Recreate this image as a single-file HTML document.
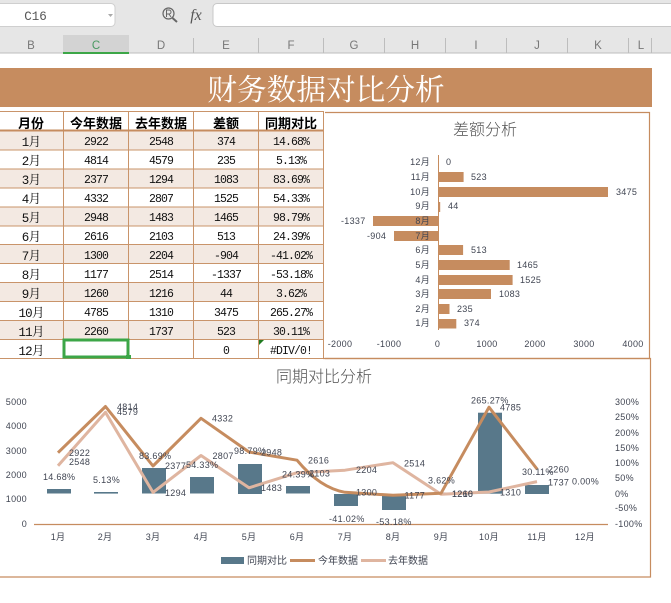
<!DOCTYPE html>
<html><head><meta charset="utf-8"><style>
html,body{margin:0;padding:0;background:#fff;width:671px;height:603px;overflow:hidden}
svg{display:block}
.h{font:11.5px "Liberation Sans",sans-serif;fill:#777;text-anchor:middle}
.m{font:11.5px "Liberation Mono","Noto Sans CJK SC",monospace;letter-spacing:-.9px;fill:#111;text-anchor:middle}
.c{font:12.5px "Liberation Mono","Noto Serif CJK SC",serif;letter-spacing:-.8px;fill:#111;text-anchor:middle}
.th{font:bold 13px "Noto Sans CJK SC",sans-serif;fill:#000;text-anchor:middle}
.l{font:9px "Liberation Sans","Noto Sans CJK SC",sans-serif;fill:#404552;letter-spacing:.3px}
.e{text-anchor:end}.mid{text-anchor:middle}
.t{font:16px "Noto Sans CJK SC",sans-serif;font-weight:300;fill:#505050;text-anchor:middle}
</style></head><body>
<svg width="671" height="603" viewBox="0 0 671 603" xmlns="http://www.w3.org/2000/svg">
<!-- toolbar -->
<rect width="671" height="53" fill="#e6e6e6"/>
<rect x="-6" y="3.500" width="121" height="23" rx="4" fill="#fff" stroke="#cfcfcf"/>
<rect x="213" y="3.500" width="470" height="23" rx="4" fill="#fff" stroke="#c8c8c8"/>
<text x="35.500" y="20" style="font:12.5px 'Liberation Mono',monospace;fill:#555" text-anchor="middle">C16</text>
<path d="M108 14h5l-2.500 3z" fill="#aaa"/>
<circle cx="168.500" cy="13.500" r="5.500" fill="none" stroke="#666" stroke-width="1.200"/>
<path d="M172.500 18l4.500 4" stroke="#666" stroke-width="2"/>
<path d="M166.500 17v-7h2.500a2 2 0 0 1 0 4h-2.500M169 14l2 3" fill="none" stroke="#666"/>
<text x="196" y="20" text-anchor="middle" style="font:italic 16px 'Liberation Serif',serif;fill:#555">fx</text>
<!-- col headers -->
<rect x="63" y="35" width="66" height="18" fill="#d3d3d3"/>
<rect y="52.500" width="671" height="1" fill="#bdbdbd"/>
<rect x="63" y="52" width="66" height="2" fill="#3ca647"/>
<path d="M193.500 38v15M258.500 38v15M323.500 38v15M384.500 38v15M445.500 38v15M506.500 38v15M567.500 38v15M628.500 38v15M651.500 38v15" stroke="#bdbdbd"/>
<text class="h" x="31" y="49">B</text><text class="h" x="96" y="49" style="fill:#4a9a62">C</text><text class="h" x="161" y="49">D</text><text class="h" x="226" y="49">E</text><text class="h" x="291" y="49">F</text><text class="h" x="354" y="49">G</text><text class="h" x="415" y="49">H</text><text class="h" x="476" y="49">I</text><text class="h" x="537" y="49">J</text><text class="h" x="598" y="49">K</text><text class="h" x="641" y="49">L</text>
<!-- title -->
<rect y="68" width="652" height="39" fill="#c68c5f"/>
<text x="326" y="100" text-anchor="middle" style="font:29.700px 'Noto Serif CJK SC',serif;fill:#fff">财务数据对比分析</text>
<!-- table fills -->
<g fill="#f3e9e2"><rect y="131" width="323" height="19"/><rect y="169" width="323" height="19"/><rect y="207" width="323" height="19"/><rect y="245" width="323" height="19"/><rect y="283" width="323" height="19"/><rect y="321" width="323" height="18"/></g>
<path d="M0 111.500H323.500M0 150H323.500M0 169H323.500M0 188H323.500M0 207H323.500M0 226H323.500M0 244.500H323.500M0 263.500H323.500M0 282.500H323.500M0 301.500H323.500M0 320.500H323.500M0 339.500H323.500M0 358.500H323.500M63.500 111V358M128.500 111V358M193.500 111V358M258.500 111V358M323.500 111V358" stroke="#c9946a" fill="none"/>
<rect y="129.500" width="323" height="2" fill="#c68c5f"/>
<g class="th"><text class="th" x="31" y="128">月份</text><text class="th" x="96" y="128">今年数据</text><text class="th" x="161" y="128">去年数据</text><text class="th" x="226" y="128">差额</text><text class="th" x="291" y="128">同期对比</text></g>
<g>
<text class="c" x="31" y="146">1月</text><text class="m" x="96" y="145">2922</text><text class="m" x="161" y="145">2548</text><text class="m" x="226" y="145">374</text><text class="m" x="291" y="145">14.68%</text>
<text class="c" x="31" y="165">2月</text><text class="m" x="96" y="164">4814</text><text class="m" x="161" y="164">4579</text><text class="m" x="226" y="164">235</text><text class="m" x="291" y="164">5.13%</text>
<text class="c" x="31" y="184">3月</text><text class="m" x="96" y="183">2377</text><text class="m" x="161" y="183">1294</text><text class="m" x="226" y="183">1083</text><text class="m" x="291" y="183">83.69%</text>
<text class="c" x="31" y="203">4月</text><text class="m" x="96" y="202">4332</text><text class="m" x="161" y="202">2807</text><text class="m" x="226" y="202">1525</text><text class="m" x="291" y="202">54.33%</text>
<text class="c" x="31" y="222">5月</text><text class="m" x="96" y="221">2948</text><text class="m" x="161" y="221">1483</text><text class="m" x="226" y="221">1465</text><text class="m" x="291" y="221">98.79%</text>
<text class="c" x="31" y="241">6月</text><text class="m" x="96" y="240">2616</text><text class="m" x="161" y="240">2103</text><text class="m" x="226" y="240">513</text><text class="m" x="291" y="240">24.39%</text>
<text class="c" x="31" y="260">7月</text><text class="m" x="96" y="259">1300</text><text class="m" x="161" y="259">2204</text><text class="m" x="226" y="259">-904</text><text class="m" x="291" y="259">-41.02%</text>
<text class="c" x="31" y="279">8月</text><text class="m" x="96" y="278">1177</text><text class="m" x="161" y="278">2514</text><text class="m" x="226" y="278">-1337</text><text class="m" x="291" y="278">-53.18%</text>
<text class="c" x="31" y="298">9月</text><text class="m" x="96" y="297">1260</text><text class="m" x="161" y="297">1216</text><text class="m" x="226" y="297">44</text><text class="m" x="291" y="297">3.62%</text>
<text class="c" x="31" y="317">10月</text><text class="m" x="96" y="316">4785</text><text class="m" x="161" y="316">1310</text><text class="m" x="226" y="316">3475</text><text class="m" x="291" y="316">265.27%</text>
<text class="c" x="31" y="336">11月</text><text class="m" x="96" y="335">2260</text><text class="m" x="161" y="335">1737</text><text class="m" x="226" y="335">523</text><text class="m" x="291" y="335">30.11%</text>
<text class="c" x="31" y="355">12月</text><text class="m" x="226" y="354">0</text><text class="m" x="291" y="354">#DIV/0!</text>
</g>
<rect x="64" y="340" width="64" height="17" fill="#fff" stroke="#3ca647" stroke-width="3"/>
<rect x="126" y="355" width="5" height="4" fill="#3ca647"/>
<path d="M259 340h5l-5 5z" fill="#1f7a1f"/>
<!-- chart 1 -->
<path d="M325 112.500H649.500V358.500H325" fill="none" stroke="#c68c5f" stroke-width="1.200"/>
<text class="t" x="485" y="135">差额分析</text>
<g fill="#c68c5f">
<rect x="438" y="172" width="25.600" height="10"/><rect x="438" y="187" width="170" height="10"/><rect x="438" y="202" width="2.200" height="10"/><rect x="373" y="216" width="65" height="10"/><rect x="394" y="231" width="44" height="10"/><rect x="438" y="245" width="25.100" height="10"/><rect x="438" y="260" width="71.700" height="10"/><rect x="438" y="275" width="74.600" height="10"/><rect x="438" y="289" width="53" height="10"/><rect x="438" y="304" width="11.500" height="10"/><rect x="438" y="319" width="18.300" height="9.500"/>
</g>
<path d="M438.500 155V330" stroke="#c68c5f"/>
<g class="l">
<text class="e" x="430" y="165">12月</text><text class="e" x="430" y="180">11月</text><text class="e" x="430" y="195">10月</text><text class="e" x="430" y="209">9月</text><text class="e" x="430" y="224">8月</text><text class="e" x="430" y="239">7月</text><text class="e" x="430" y="253">6月</text><text class="e" x="430" y="268">5月</text><text class="e" x="430" y="283">4月</text><text class="e" x="430" y="297">3月</text><text class="e" x="430" y="312">2月</text><text class="e" x="430" y="326">1月</text>
<text x="446" y="165">0</text><text x="471" y="180">523</text><text x="616" y="195">3475</text><text x="448" y="209">44</text><text x="341" y="224">-1337</text><text x="367" y="239">-904</text><text x="471" y="253">513</text><text x="517" y="268">1465</text><text x="520" y="283">1525</text><text x="499" y="297">1083</text><text x="457" y="312">235</text><text x="464" y="326">374</text>
<text class="mid" x="340" y="347">-2000</text><text class="mid" x="389" y="347">-1000</text><text class="mid" x="437.500" y="347">0</text><text class="mid" x="487" y="347">1000</text><text class="mid" x="535" y="347">2000</text><text class="mid" x="584" y="347">3000</text><text class="mid" x="633" y="347">4000</text>
</g>
<!-- chart 2 -->
<path d="M323 358.500H650.500V577H0" fill="none" stroke="#c68c5f" stroke-width="1.200"/>
<text class="t" x="324" y="382">同期对比分析</text>
<g fill="#58788a">
<rect x="47" y="489" width="24" height="4.500"/><rect x="94" y="492" width="24" height="1.600"/><rect x="142" y="468" width="24" height="25.500"/><rect x="190" y="477" width="24" height="16.500"/><rect x="238" y="464" width="24" height="30"/><rect x="286" y="486" width="24" height="7.500"/><rect x="334" y="494" width="24" height="12"/><rect x="382" y="494" width="24" height="16"/><rect x="430" y="492.500" width="24" height="1"/><rect x="478" y="412.700" width="24" height="81"/><rect x="525" y="485" width="24" height="9"/>
</g>
<path d="M34 524.500H608" stroke="#c68c5f" stroke-width="1.200"/>
<path d="M58 465.800L105.500 412.300L153 492.400L201 455.500L249 487.800L297 472.700L345 470.200L393 462.700L441 494.300L489 492L537 481.600" fill="none" stroke="#dfb5a0" stroke-width="3" stroke-linejoin="round"/>
<path d="M58 452.700L105.500 406.500L153 466L201 418.300L249 452L297 460.200Q320 488 345 492.300L393 495.300L441 493.300L489 407.200L537 469" fill="none" stroke="#c68c5f" stroke-width="3" stroke-linejoin="round"/>
<g class="l">
<text class="e" x="27" y="405">5000</text><text class="e" x="27" y="429">4000</text><text class="e" x="27" y="454">3000</text><text class="e" x="27" y="478">2000</text><text class="e" x="27" y="502">1000</text><text class="e" x="27" y="527">0</text>
<text x="615" y="405">300%</text><text x="615" y="420">250%</text><text x="615" y="436">200%</text><text x="615" y="451">150%</text><text x="615" y="466">100%</text><text x="615" y="481">50%</text><text x="615" y="497">0%</text><text x="615" y="511">-50%</text><text x="615" y="527">-100%</text>
<text class="mid" x="58" y="540">1月</text><text class="mid" x="105" y="540">2月</text><text class="mid" x="153" y="540">3月</text><text class="mid" x="201" y="540">4月</text><text class="mid" x="249" y="540">5月</text><text class="mid" x="297" y="540">6月</text><text class="mid" x="345" y="540">7月</text><text class="mid" x="393" y="540">8月</text><text class="mid" x="441" y="540">9月</text><text class="mid" x="489" y="540">10月</text><text class="mid" x="537" y="540">11月</text><text class="mid" x="585" y="540">12月</text>
<text x="43" y="480">14.68%</text><text x="93" y="483">5.13%</text><text x="139" y="459">83.69%</text><text x="186" y="468">54.33%</text><text x="234" y="454">98.79%</text><text x="282" y="477.500">24.39%</text><text x="329" y="522">-41.02%</text><text x="376" y="525">-53.18%</text><text x="428" y="483.500">3.62%</text><text x="471" y="403.500">265.27%</text><text x="522" y="475">30.11%</text><text x="572" y="484.500">0.00%</text>
<text x="69" y="456">2922</text><text x="69" y="465">2548</text><text x="117" y="410">4814</text><text x="117" y="415">4579</text><text x="165" y="469">2377</text><text x="165" y="496">1294</text><text x="212" y="421.500">4332</text><text x="212.500" y="459">2807</text><text x="261" y="455.500">2948</text><text x="261" y="491">1483</text><text x="308" y="463.500">2616</text><text x="309" y="476.500">2103</text><text x="356" y="473">2204</text><text x="356" y="495.500">1300</text><text x="404" y="466.500">2514</text><text x="404.500" y="498.500">1177</text><text x="452" y="497">1260</text><text x="452" y="497">1216</text><text x="500" y="410.500">4785</text><text x="500" y="495.500">1310</text><text x="548" y="472.500">2260</text><text x="548" y="485.500">1737</text>
</g>
<rect x="221" y="557" width="23" height="7" fill="#58788a"/>
<path d="M290 560.500H315" stroke="#c68c5f" stroke-width="3"/>
<path d="M361 560.500H386" stroke="#dfb5a0" stroke-width="3"/>
<g class="l">
<text x="247" y="564" style="font-size:10px;letter-spacing:0">同期对比</text><text x="318" y="564" style="font-size:10px;letter-spacing:0">今年数据</text><text x="388" y="564" style="font-size:10px;letter-spacing:0">去年数据</text>
</g>
</svg>
</body></html>
